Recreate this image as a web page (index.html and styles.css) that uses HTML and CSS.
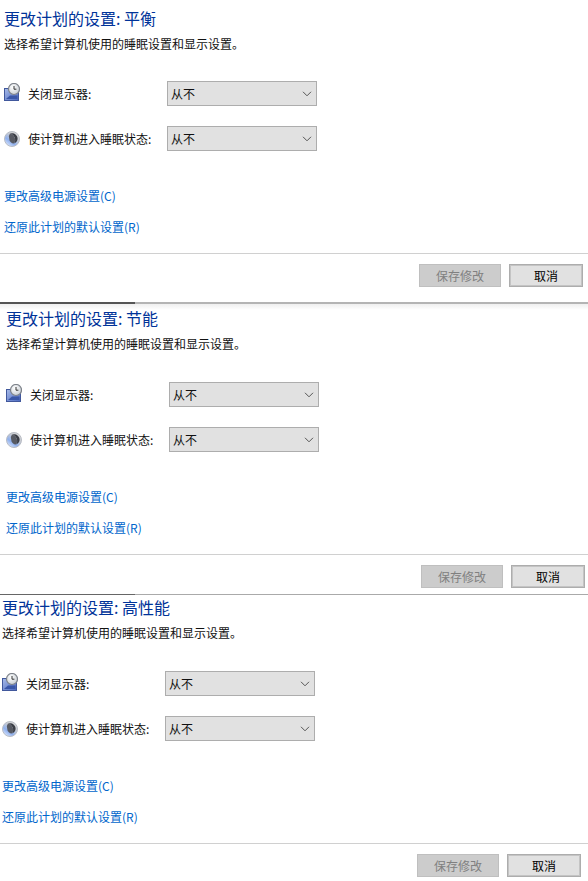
FILE: index.html
```html
<!DOCTYPE html>
<html lang="zh">
<head>
<meta charset="utf-8">
<title>电源计划设置</title>
<link rel="stylesheet" href="styles.css">
</head>
<body>
<svg class="defs" width="0" height="0" aria-hidden="true">
  <defs>
    <linearGradient id="scr" x1="0" y1="0" x2="1" y2="1"><stop offset="0" stop-color="#a9bce8"/><stop offset="1" stop-color="#4a68c0"/></linearGradient>
    <radialGradient id="clk" cx=".4" cy=".35" r=".7"><stop offset="0" stop-color="#fff"/><stop offset="1" stop-color="#c6ccd2"/></radialGradient>
    <linearGradient id="orb" x1=".15" y1=".95" x2=".8" y2=".1"><stop offset="0" stop-color="#dfe9fb"/><stop offset=".35" stop-color="#8fb0ee"/><stop offset=".7" stop-color="#c8ccd4"/><stop offset="1" stop-color="#d8d8d8"/></linearGradient>
    <symbol id="i-display" viewBox="0 0 16 18">
      <rect x="0.5" y="5.5" width="14" height="12" fill="url(#scr)" stroke="#41589c" stroke-width="1"/>
      <path d="M2 16h11.5v-3.5H6z" fill="#3a57a8"/>
      <circle cx="10" cy="6" r="5.5" fill="url(#clk)" stroke="#7d828a" stroke-width="1.2"/>
      <path d="M10 3v3.2h2.4" fill="none" stroke="#333" stroke-width="1"/>
    </symbol>
    <symbol id="i-sleep" viewBox="0 0 16 16">
      <circle cx="8" cy="8" r="7.5" fill="url(#orb)" stroke="#b8bcc4" stroke-width="1"/>
      <path d="M6 2.6A5.6 5.6 0 0 1 13.6 8 5.6 5.6 0 0 1 10 12.6 6.5 6.5 0 0 0 6 2.6z" fill="#3b3e46"/>
      <path d="M6 2.6A6.5 6.5 0 0 1 10 12.6 5 5 0 0 1 5.2 7.5 5 5 0 0 1 6 2.6z" fill="#575a63"/>
    </symbol>
    <symbol id="i-chev" viewBox="0 0 10 6">
      <path d="M1 .8 5 4.8 9 .8" fill="none" stroke="#555" stroke-width="1"/>
    </symbol>
  </defs>
</svg>

<section class="panel panel-a">
  <h1 class="title">更改计划的设置: 平衡</h1>
  <p class="intro">选择希望计算机使用的睡眠设置和显示设置。</p>
  <div class="rows">
    <div class="row"><svg class="icon icon-display"><use href="#i-display"/></svg><span class="label">关闭显示器:</span><div class="select"><span>从不</span><svg class="chev"><use href="#i-chev"/></svg></div></div>
    <div class="row"><svg class="icon"><use href="#i-sleep"/></svg><span class="label">使计算机进入睡眠状态:</span><div class="select"><span>从不</span><svg class="chev"><use href="#i-chev"/></svg></div></div>
  </div>
  <div class="links"><a class="link">更改高级电源设置(C)</a><a class="link">还原此计划的默认设置(R)</a></div>
  <div class="footer"><div class="btn btn-off">保存修改</div><div class="btn btn-cancel">取消</div></div>
</section>

<section class="panel panel-b">
  <div class="edge"></div>
  <h1 class="title">更改计划的设置: 节能</h1>
  <p class="intro">选择希望计算机使用的睡眠设置和显示设置。</p>
  <div class="rows">
    <div class="row"><svg class="icon icon-display"><use href="#i-display"/></svg><span class="label">关闭显示器:</span><div class="select"><span>从不</span><svg class="chev"><use href="#i-chev"/></svg></div></div>
    <div class="row"><svg class="icon"><use href="#i-sleep"/></svg><span class="label">使计算机进入睡眠状态:</span><div class="select"><span>从不</span><svg class="chev"><use href="#i-chev"/></svg></div></div>
  </div>
  <div class="links"><a class="link">更改高级电源设置(C)</a><a class="link">还原此计划的默认设置(R)</a></div>
  <div class="footer"><div class="btn btn-off">保存修改</div><div class="btn btn-cancel">取消</div></div>
</section>

<section class="panel panel-c">
  <div class="edge"></div>
  <h1 class="title">更改计划的设置: 高性能</h1>
  <p class="intro">选择希望计算机使用的睡眠设置和显示设置。</p>
  <div class="rows">
    <div class="row"><svg class="icon icon-display"><use href="#i-display"/></svg><span class="label">关闭显示器:</span><div class="select"><span>从不</span><svg class="chev"><use href="#i-chev"/></svg></div></div>
    <div class="row"><svg class="icon"><use href="#i-sleep"/></svg><span class="label">使计算机进入睡眠状态:</span><div class="select"><span>从不</span><svg class="chev"><use href="#i-chev"/></svg></div></div>
  </div>
  <div class="links"><a class="link">更改高级电源设置(C)</a><a class="link">还原此计划的默认设置(R)</a></div>
  <div class="footer"><div class="btn btn-off">保存修改</div><div class="btn btn-cancel">取消</div></div>
</section>
</body>
</html>
```

FILE: styles.css
```css
* { box-sizing: border-box; }
html, body { margin: 0; padding: 0; background: #fff; }
body {
  width: 588px;
  height: 881px;
  overflow: hidden;
  font-family: "Noto Sans CJK SC", "Liberation Sans", sans-serif;
  font-size: 12px;
  color: #111;
}
.defs { display: block; height: 0; }
.panel { display: flex; flex-direction: column; overflow: hidden; position: relative; }
.panel-a { height: 302px; --inset: 4px; --end: 5px; padding-top: 8px; --rows: 27px; }
.panel-b { height: 292px; --inset: 6px; --end: 3px; padding-top: 6px; --rows: 28px; }
.panel-c { height: 287px; --inset: 2px; --end: 7px; padding-top: 3px; --rows: 28px; }
.panel-b::before {
  content: "";
  position: absolute;
  top: 2px; left: 0; right: 0;
  height: 6px;
  background: linear-gradient(#efefef, #fff);
}
.edge {
  position: absolute;
  top: 0; left: 0; right: 0;
  height: 2px;
  background: linear-gradient(90deg, #555 0 135px, #b4b4b4 135px);
}
.panel-c .edge { height: 1px; background: linear-gradient(90deg, #666 0 135px, #aaa 135px); }
.title {
  margin: 0;
  padding-left: var(--inset);
  font-size: 16px;
  font-weight: 400;
  line-height: 20px;
  color: #003399;
  position: relative;
}
.intro {
  margin: 6px 0 0;
  padding-left: var(--inset);
  font-size: 12px;
  line-height: 20px;
}
.rows { display: flex; flex-direction: column; gap: 20px; margin-top: var(--rows); padding-left: var(--inset); }
.row { display: flex; align-items: center; height: 25px; }
.icon { width: 16px; height: 16px; flex: none; }
.icon-display { height: 18px; margin-top: -4px; }
.label { width: 147px; padding-left: 8px; flex: none; white-space: nowrap; line-height: 16px; }
.select {
  display: flex;
  align-items: center;
  justify-content: space-between;
  width: 150px;
  height: 25px;
  padding: 0 4px 0 3px;
  background: #e1e1e1;
  border: 1px solid #adadad;
}
.chev { width: 10px; height: 6px; margin-right: 0; }
.links { display: flex; flex-direction: column; gap: 13px; margin-top: 36px; padding-left: var(--inset); }
.link { color: #0066cc; line-height: 18px; white-space: nowrap; }
.footer {
  display: flex;
  justify-content: flex-end;
  gap: 8px;
  margin-top: 17px;
  padding: 10px var(--end) 0 0;
  border-top: 1px solid #d0d0d0;
}
.btn {
  display: flex;
  align-items: center;
  justify-content: center;
  height: 23px;
  border: 1px solid #adadad;
}
.btn-off { width: 82px; background: #cccccc; border-color: #bfbfbf; color: #808080; }
.btn-cancel { width: 74px; background: #e1e1e1; color: #000; box-shadow: inset 0 0 0 1px #c4c4c4; }
```
